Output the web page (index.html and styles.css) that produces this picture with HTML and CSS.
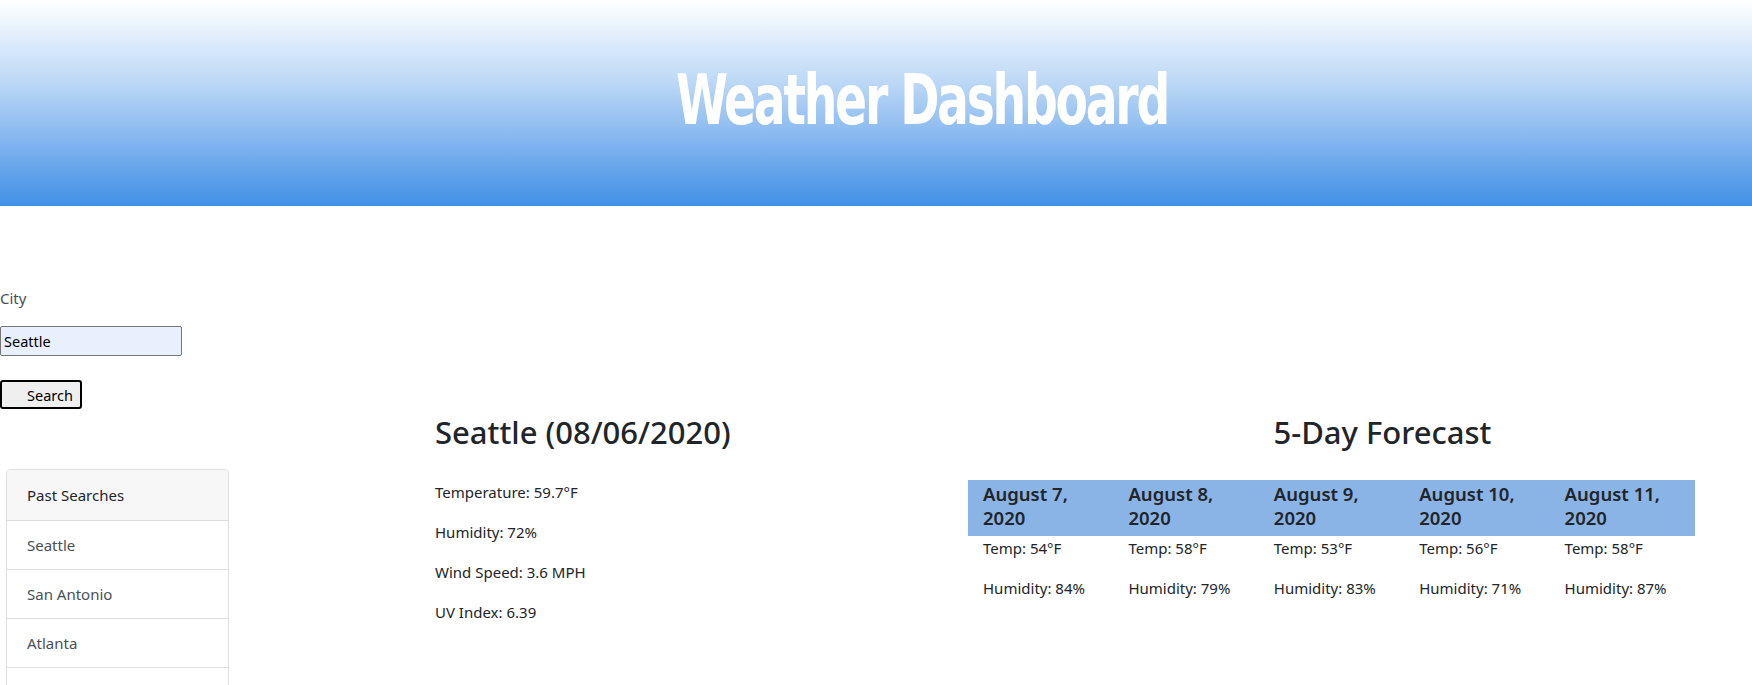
FILE: index.html
```html
<!DOCTYPE html>
<html lang="en">
<head>
<meta charset="utf-8">
<title>Weather Dashboard</title>
<link rel="stylesheet" href="styles.css">
</head>
<body>
<header class="hero">
  <h1 class="hero-title">Weather Dashboard</h1>
</header>
<div class="layout">
  <aside class="sidebar">
    <form class="search-form">
      <label class="city-label" for="city">City</label>
      <input class="city-input" id="city" type="text" value="Seattle">
      <button class="search-btn" type="button">Search</button>
    </form>
    <div class="history-card">
      <div class="history-header">Past Searches</div>
      <ul class="history-list">
        <li class="history-item">Seattle</li>
        <li class="history-item">San Antonio</li>
        <li class="history-item">Atlanta</li>
        <li class="history-item history-item-empty"></li>
      </ul>
    </div>
  </aside>
  <main class="content">
    <section class="current">
      <h2 class="section-title">Seattle (08/06/2020)</h2>
      <p class="stat">Temperature: 59.7°F</p>
      <p class="stat">Humidity: 72%</p>
      <p class="stat">Wind Speed: 3.6 MPH</p>
      <p class="stat">UV Index: 6.39</p>
    </section>
    <section class="forecast">
      <h2 class="section-title forecast-title">5-Day Forecast</h2>
      <div class="forecast-grid">
        <div class="day">
          <h5 class="day-date">August 7, 2020</h5>
          <p class="day-stat">Temp: 54°F</p>
          <p class="day-stat">Humidity: 84%</p>
        </div>
        <div class="day">
          <h5 class="day-date">August 8, 2020</h5>
          <p class="day-stat">Temp: 58°F</p>
          <p class="day-stat">Humidity: 79%</p>
        </div>
        <div class="day">
          <h5 class="day-date">August 9, 2020</h5>
          <p class="day-stat">Temp: 53°F</p>
          <p class="day-stat">Humidity: 83%</p>
        </div>
        <div class="day">
          <h5 class="day-date">August 10, 2020</h5>
          <p class="day-stat">Temp: 56°F</p>
          <p class="day-stat">Humidity: 71%</p>
        </div>
        <div class="day">
          <h5 class="day-date">August 11, 2020</h5>
          <p class="day-stat">Temp: 58°F</p>
          <p class="day-stat">Humidity: 87%</p>
        </div>
      </div>
    </section>
  </main>
</div>
</body>
</html>
```
FILE: styles.css
```css
* { box-sizing: border-box; }

html, body {
  margin: 0;
  padding: 0;
  overflow: hidden;
}

body {
  font-family: "Noto Sans", "Open Sans", sans-serif;
  font-size: 15px;
  line-height: 24px;
  color: #212529;
  background: #fff;
}

.hero {
  height: 206px;
  background: linear-gradient(to bottom, #ffffff 0%, #bcd8f6 40%, #80b3ee 70%, #4190e6 100%);
  display: flex;
  align-items: center;
  justify-content: center;
}

.hero-title {
  margin: 0 0 6px 92px;
  font-family: "DejaVu Sans Condensed", "Liberation Sans Narrow", sans-serif;
  font-weight: 700;
  font-size: 70px;
  line-height: 1;
  color: #fff;
  letter-spacing: -3px;
  transform: scaleX(0.75);
}

.layout {
  display: flex;
  align-items: flex-start;
}

.sidebar {
  width: 435px;
  flex: none;
  padding-top: 80px;
}

.search-form {
  display: flex;
  flex-direction: column;
  align-items: flex-start;
}

.city-label {
  color: #495057;
  line-height: 24px;
  margin-bottom: 16px;
}

.city-input {
  width: 182px;
  height: 30px;
  margin: 0;
  padding: 1px 3px;
  border: 1px solid #767676;
  border-radius: 2px;
  background: #e8f0fe;
  font: inherit;
  font-size: 14.5px;
  color: #000;
}

.search-btn {
  margin-top: 24px;
  width: 82px;
  height: 29px;
  padding: 0 6px 0 25px;
  border: 2px solid #000;
  border-radius: 3px;
  background: #efefef;
  font: inherit;
  font-size: 14.5px;
  color: #000;
  text-align: left;
}

.history-card {
  margin: 60px 0 0 6px;
  width: 223px;
  border: 1px solid #dfdfdf;
  border-radius: 4px;
  overflow: hidden;
}

.history-header {
  height: 51px;
  padding: 0 20px;
  display: flex;
  align-items: center;
  background: #f7f7f7;
  border-bottom: 1px solid #dcdcdc;
  color: #212529;
}

.history-list {
  list-style: none;
  margin: 0;
  padding: 0;
}

.history-item {
  height: 49px;
  padding: 0 20px;
  display: flex;
  align-items: center;
  border-bottom: 1px solid #e0e0e0;
  color: #495057;
}

.content {
  flex: 1;
  display: flex;
  padding-top: 208px;
}

.current {
  width: 533px;
  flex: none;
}

.section-title {
  margin: 0 0 30px 0;
  font-size: 31px;
  font-weight: 500;
  line-height: 36px;
  color: #212529;
}

.stat {
  margin: 0 0 16px 0;
}

.forecast {
  width: 727px;
  flex: none;
}

.forecast-title {
  text-align: center;
  padding-left: 102px;
  margin-bottom: 30px;
}

.forecast-grid {
  display: grid;
  grid-template-columns: repeat(5, 1fr);
  background: linear-gradient(to bottom, #8ab4e6 0, #8ab4e6 56px, transparent 56px);
}

.day {
  padding: 0 15px;
}

.day-date {
  margin: 0;
  height: 56px;
  padding-top: 2px;
  font-size: 18.5px;
  line-height: 24px;
  font-weight: 600;
  color: #212529;
}

.day-stat {
  margin: 0 0 16px 0;
}
```
